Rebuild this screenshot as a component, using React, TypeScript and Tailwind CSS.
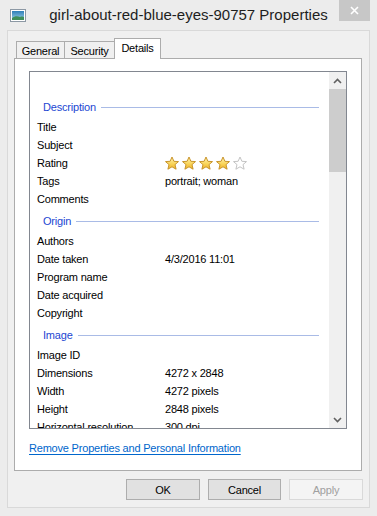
import React from 'react'

const FONT = { fontFamily: '"Liberation Sans", Arial, sans-serif' }

type Row = { label: string; value?: React.ReactNode }
type Section = { title: string; rows: Row[] }

function Star({ filled }: { filled: boolean }) {
  return (
    <svg width="16" height="15" viewBox="0 0 16 15" className="shrink-0">
      <defs>
        <linearGradient id="starGold" x1="0" y1="0" x2="0" y2="1">
          <stop offset="0" stopColor="#fff3b8" />
          <stop offset="0.55" stopColor="#f9d55a" />
          <stop offset="1" stopColor="#eeb127" />
        </linearGradient>
      </defs>
      <path
        d="M8 1 L9.9 5.3 L14.5 5.6 L11 8.6 L12.1 13.2 L8 10.8 L3.9 13.2 L5 8.6 L1.5 5.6 L6.1 5.3 Z"
        fill={filled ? 'url(#starGold)' : '#ffffff'}
        stroke={filled ? '#c9952c' : '#c4c4c4'}
        strokeWidth="1"
        strokeLinejoin="round"
      />
    </svg>
  )
}

function Rating({ value }: { value: number }) {
  return (
    <div className="-ml-[1px] flex items-center gap-[1px]">
      {[1, 2, 3, 4, 5].map((n) => (
        <Star key={n} filled={n <= value} />
      ))}
    </div>
  )
}

// Only the rows that the list can show before it scrolls
const SECTIONS: Section[] = [
  {
    title: 'Description',
    rows: [
      { label: 'Title' },
      { label: 'Subject' },
      { label: 'Rating', value: <Rating value={4} /> },
      { label: 'Tags', value: 'portrait; woman' },
      { label: 'Comments' },
    ],
  },
  {
    title: 'Origin',
    rows: [
      { label: 'Authors' },
      { label: 'Date taken', value: '4/3/2016 11:01' },
      { label: 'Program name' },
      { label: 'Date acquired' },
      { label: 'Copyright' },
    ],
  },
  {
    title: 'Image',
    rows: [
      { label: 'Image ID' },
      { label: 'Dimensions', value: '4272 x 2848' },
      { label: 'Width', value: '4272 pixels' },
      { label: 'Height', value: '2848 pixels' },
      { label: 'Horizontal resolution', value: '300 dpi' },
    ],
  },
]

function PictureIcon() {
  return (
    <svg width="16" height="13" viewBox="0 0 16 13">
      <defs>
        <linearGradient id="sky" x1="0" y1="0" x2="0" y2="1">
          <stop offset="0" stopColor="#2f7fb8" />
          <stop offset="1" stopColor="#9fd3e8" />
        </linearGradient>
      </defs>
      <rect x="0.5" y="0.5" width="15" height="12" fill="#ffffff" stroke="#8c98a4" />
      <rect x="2" y="2" width="12" height="9" fill="url(#sky)" />
      <path d="M2 9 C5 6.5 8 7 10 8 C12 7.2 13 7.5 14 8 L14 11 L2 11 Z" fill="#3f8f5a" />
    </svg>
  )
}

function ChevronUp() {
  return (
    <svg width="9" height="6" viewBox="0 0 9 6">
      <path d="M1 5 L4.5 1.5 L8 5" fill="none" stroke="#606060" strokeWidth="1.6" />
    </svg>
  )
}

function ChevronDown() {
  return (
    <svg width="9" height="6" viewBox="0 0 9 6">
      <path d="M1 1 L4.5 4.5 L8 1" fill="none" stroke="#606060" strokeWidth="1.6" />
    </svg>
  )
}

// Segoe UI 9pt is narrower than Arial; a smaller size with tight tracking keeps the widths
const uiText = 'text-[11px] leading-[14px] tracking-[-0.2px]'

export default function App() {
  return (
    <div className="flex h-[516px] w-[377px] flex-col bg-[#ececec] text-black" style={FONT}>
      {/* Title bar */}
      <div className="grid h-[30px] grid-cols-[47px_1fr_47px]">
        <div className="flex items-start pl-[10px] pt-[9px]">
          <PictureIcon />
        </div>
        <div className="flex items-start justify-center whitespace-nowrap pt-[5px] text-[15px] leading-[20px] text-[#1e1e1e]">
          girl-about-red-blue-eyes-90757 Properties
        </div>
        <div className="flex items-start justify-end pr-[7px]">
          <div className="flex h-[21px] w-[31px] items-center justify-center bg-[#c7c7c7]">
            <svg width="9" height="9" viewBox="0 0 9 9">
              <path d="M1 1 L8 8 M8 1 L1 8" stroke="#ffffff" strokeWidth="1.6" />
            </svg>
          </div>
        </div>
      </div>

      {/* Client area */}
      <div className="mx-[7px] mb-[8px] flex flex-1 flex-col border border-[#d9d9d9] bg-[#f0f0f0] px-[6px] pt-[7px]">
        {/* Tabs */}
        <div className={`flex h-[20px] items-end pl-[2px] ${uiText}`}>
          <div className="flex h-[17px] w-[49px] items-center justify-center border border-b-0 border-[#acacac] bg-[#f0f0f0] pt-[1px]">
            General
          </div>
          <div className="-ml-[1px] flex h-[17px] w-[51px] items-center justify-center border border-b-0 border-[#acacac] bg-[#f0f0f0] pt-[1px]">
            Security
          </div>
          <div className="relative z-10 -mb-[1px] -ml-[1px] flex h-[21px] w-[47px] items-center justify-center border border-b-0 border-[#acacac] bg-white pb-[2px]">
            Details
          </div>
        </div>

        {/* Tab panel */}
        <div className="flex h-[413px] w-[348px] flex-col border border-[#acacac] bg-white px-[14px] pt-[12px]">
          {/* Property list */}
          <div className="flex h-[358px] w-[318px] border border-[#828790] bg-white">
            <div className={`flex-1 overflow-hidden ${uiText}`}>
              <div className="h-[22px]" />
              {SECTIONS.map((section) => (
                <div key={section.title}>
                  <div className="flex h-[24px] items-center pl-[13px] pr-[10px] pt-[2px]">
                    <span className="text-[#1d47d2]">{section.title}</span>
                    <div className="ml-[5px] h-[1px] flex-1 bg-[#a9bbe6]" />
                  </div>
                  {section.rows.map((row) => (
                    <div key={row.label} className="flex h-[18px] items-center pl-[7px]">
                      <div className="w-[128px] shrink-0 whitespace-nowrap">{row.label}</div>
                      <div className="whitespace-nowrap">{row.value}</div>
                    </div>
                  ))}
                </div>
              ))}
            </div>
            {/* Scrollbar */}
            <div className="flex w-[17px] flex-col bg-[#f0f0f0]">
              <div className="flex h-[17px] items-center justify-center">
                <ChevronUp />
              </div>
              <div className="h-[83px] bg-[#cdcdcd]" />
              <div className="flex-1" />
              <div className="flex h-[17px] items-center justify-center">
                <ChevronDown />
              </div>
            </div>
          </div>

          <div className={`pt-[12px] ${uiText}`}>
            <span className="text-[#0066cc] underline underline-offset-[2px]">
              Remove Properties and Personal Information
            </span>
          </div>
        </div>

        {/* Buttons */}
        <div className={`flex justify-end gap-[8px] pt-[8px] ${uiText}`}>
          <button className="h-[21px] w-[74px] border border-[#adadad] bg-[#e1e1e1] text-black">OK</button>
          <button className="h-[21px] w-[73px] border border-[#adadad] bg-[#e1e1e1] text-black">Cancel</button>
          <button className="h-[21px] w-[74px] border border-[#d9d9d9] bg-[#f4f4f4] text-[#a0a0a0]">Apply</button>
        </div>
      </div>
    </div>
  )
}
